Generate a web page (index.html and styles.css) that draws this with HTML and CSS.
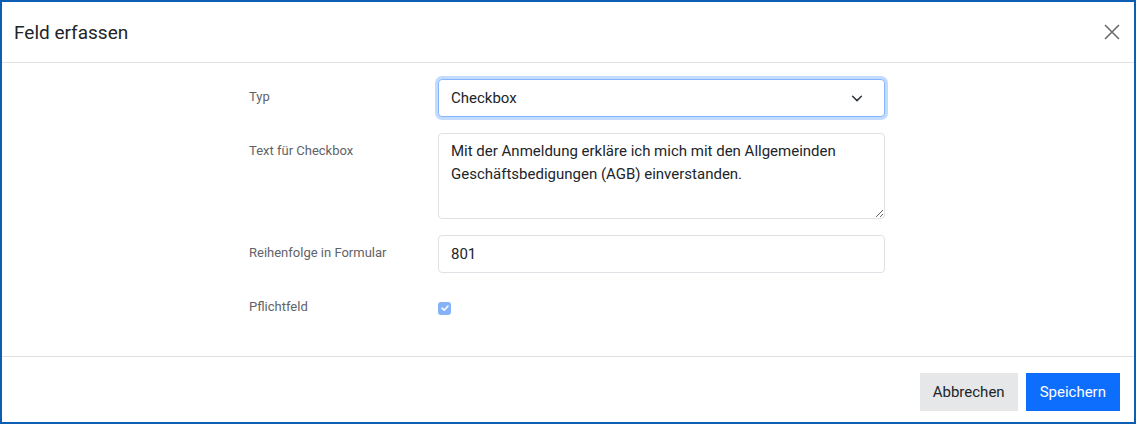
FILE: index.html
```html
<!DOCTYPE html>
<html lang="de">
<head>
    <meta charset="UTF-8">
    <title>Feld erfassen</title>
    <link rel="stylesheet" href="styles.css">
</head>
<body>
    <div class="dialog">
        <div class="dialog-header">
            <h1>Feld erfassen</h1>
            <button class="close" type="button" aria-label="Schliessen">
                <svg width="16" height="16" viewBox="0 0 16 16"><path d="M1 1 L15 15 M15 1 L1 15" stroke="#6c6c6c" stroke-width="1.6" fill="none"/></svg>
            </button>
        </div>
        <div class="dialog-body">
            <form class="field-form">
                <label class="form-label">Typ</label>
                <div class="select focused">
                    <span>Checkbox</span>
                    <svg width="14" height="14" viewBox="0 0 16 16"><path d="M3 6 L8 11 L13 6" stroke="#343a40" stroke-width="1.8" fill="none" stroke-linecap="round" stroke-linejoin="round"/></svg>
                </div>

                <label class="form-label">Text für Checkbox</label>
                <textarea class="control textarea">Mit der Anmeldung erkläre ich mich mit den Allgemeinden Geschäftsbedigungen (AGB) einverstanden.</textarea>

                <label class="form-label">Reihenfolge in Formular</label>
                <input class="control" type="text" value="801">

                <label class="form-label check-label">Pflichtfeld</label>
                <div class="check-wrap">
                    <span class="check">
                        <svg width="10" height="10" viewBox="0 0 10 10"><path d="M2 5.2 L4.2 7.2 L8 3" stroke="#fff" stroke-width="1.6" fill="none" stroke-linecap="round" stroke-linejoin="round"/></svg>
                    </span>
                </div>
            </form>
        </div>
        <div class="dialog-footer">
            <button class="btn btn-light" type="button">Abbrechen</button>
            <button class="btn btn-primary" type="button">Speichern</button>
        </div>
    </div>
</body>
</html>
```

FILE: styles.css
```css
/* General */
body {
    margin: 0;
    font-family: 'Roboto', 'Noto Sans', sans-serif;
    color: #212529;
    background: #fff;
}
.dialog {
    width: 1136px;
    height: 424px;
    box-sizing: border-box;
    border: 2px solid #0b5eb1;
    display: flex;
    flex-direction: column;
}

/* Header */
.dialog-header {
    height: 60px;
    border-bottom: 1px solid #dee2e6;
    display: flex;
    align-items: center;
    justify-content: space-between;
    padding: 0 14px 0 12px;
}
.dialog-header h1 {
    margin: 0;
    font-size: 19px;
    font-weight: 400;
    color: #212529;
}
.close {
    background: none;
    border: none;
    padding: 0;
    width: 16px;
    height: 16px;
    cursor: pointer;
}

/* Body */
.dialog-body {
    flex: 1;
    padding-top: 16px;
}
.field-form {
    margin-left: 247px;
    display: grid;
    grid-template-columns: 189px 447px;
    row-gap: 16px;
}
.form-label {
    font-size: 13px;
    color: #5f6368;
    padding-top: 10px;
}
.check-label {
    padding-top: 10px;
}
.select,
.control {
    box-sizing: border-box;
    width: 447px;
    height: 38px;
    border: 1px solid #dee2e6;
    border-radius: 4px;
    font-family: inherit;
    font-size: 15px;
    color: #212529;
    padding: 0 12px;
    background: #fff;
    outline: none;
}
.select {
    display: flex;
    align-items: center;
    justify-content: space-between;
    padding-right: 20px;
}
.select.focused {
    border-color: #86b7fe;
    box-shadow: 0 0 0 3px rgba(13, 110, 253, 0.25);
}
.textarea {
    height: 86px;
    padding: 6px 12px;
    line-height: 23px;
    resize: vertical;
}
.check-wrap {
    height: 32px;
    display: flex;
    align-items: center;
    padding-top: 3px;
}
.check {
    width: 13px;
    height: 13px;
    border-radius: 3px;
    background: #86b2f7;
    display: flex;
    align-items: center;
    justify-content: center;
}

/* Footer */
.dialog-footer {
    border-top: 1px solid #dee2e6;
    display: flex;
    justify-content: flex-end;
    align-items: flex-start;
    gap: 8px;
    padding: 16px 14px 0;
    height: 66px;
    box-sizing: border-box;
}
.btn {
    height: 38px;
    border: none;
    border-radius: 0;
    padding: 0 13px;
    font-family: inherit;
    font-size: 15px;
    cursor: pointer;
}
.btn-light {
    background: #e6e7e9;
    color: #212529;
}
.btn-primary {
    background: #0d6efd;
    color: #fff;
    padding: 0 14px;
}
```
